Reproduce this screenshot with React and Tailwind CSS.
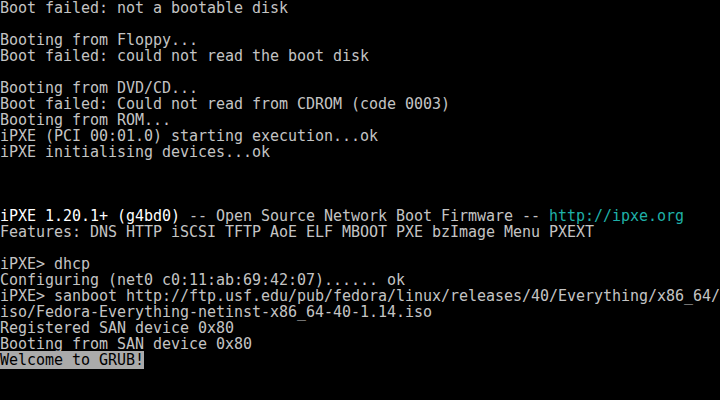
import React from "react";

const G = "text-[#c4c4c4]";

function Row({ children }) {
  return <div className="h-[16px] whitespace-pre">{children || " "}</div>;
}

export default function App() {
  return (
    <div
      className={`w-[720px] h-[400px] bg-black overflow-hidden text-[15px] leading-[16px] tracking-[-0.03px] ${G}`}
      style={{ fontFamily: '"DejaVu Sans Mono", monospace' }}
    >
      <Row>Boot failed: not a bootable disk</Row>
      <Row />
      <Row>Booting from Floppy...</Row>
      <Row>Boot failed: could not read the boot disk</Row>
      <Row />
      <Row>Booting from DVD/CD...</Row>
      <Row>Boot failed: Could not read from CDROM (code 0003)</Row>
      <Row>Booting from ROM...</Row>
      <Row>iPXE (PCI 00:01.0) starting execution...ok</Row>
      <Row>iPXE initialising devices...ok</Row>
      <Row />
      <Row />
      <Row />
      <Row>
        <span className="text-white">iPXE 1.20.1+ (g4bd0)</span>
        {" -- Open Source Network Boot Firmware -- "}
        <span className="text-[#1fb0a8]">http://ipxe.org</span>
      </Row>
      <Row>Features: DNS HTTP iSCSI TFTP AoE ELF MBOOT PXE bzImage Menu PXEXT</Row>
      <Row />
      <Row>iPXE&gt; dhcp</Row>
      <Row>Configuring (net0 c0:11:ab:69:42:07)...... ok</Row>
      <Row>iPXE&gt; sanboot http://ftp.usf.edu/pub/fedora/linux/releases/40/Everything/x86_64/</Row>
      <Row>iso/Fedora-Everything-netinst-x86_64-40-1.14.iso</Row>
      <Row>Registered SAN device 0x80</Row>
      <Row>Booting from SAN device 0x80</Row>
      <Row>
        <span className="bg-[#aaaaaa] text-black">Welcome to GRUB!</span>
      </Row>
    </div>
  );
}
